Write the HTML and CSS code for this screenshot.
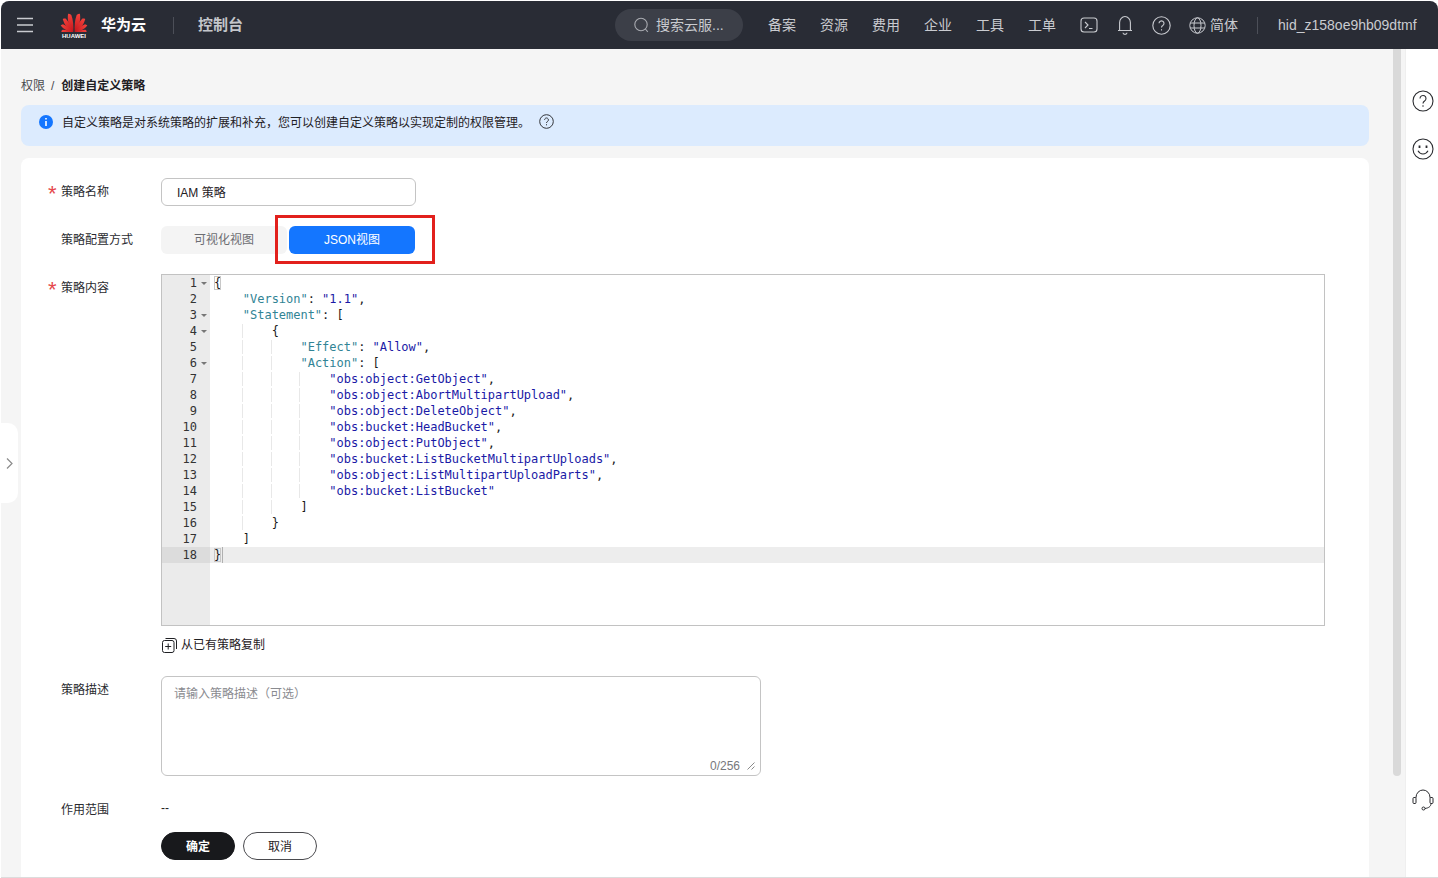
FILE: index.html
```html
<!DOCTYPE html>
<html lang="zh-CN">
<head>
    <meta charset="UTF-8">
    <title>创建自定义策略</title>
    <link rel="stylesheet" href="styles.css">
</head>
<body>
<div class="window">
    <header class="topbar">
        <svg class="icon-menu" width="16" height="16" viewBox="0 0 16 16"><path d="M0 1.5h16M0 8h16M0 14.5h16" stroke="#c9cbd0" stroke-width="1.6"/></svg>
        <div class="logo">
            <svg width="28" height="20" viewBox="0 0 28 20">
                <defs>
                    <linearGradient id="petal" x1="0" y1="0" x2="0" y2="1">
                        <stop offset="0" stop-color="#f4433c"/>
                        <stop offset="1" stop-color="#c4141b"/>
                    </linearGradient>
                    <path id="p" d="M0 0C-2.300-3.400-2.600-7.600-1.300-11.500C-.5-11.300.1-11 .6-10.500C1.200-7 .8-3.400 0 0Z" fill="url(#petal)"/>
                </defs>
                <g transform="translate(14 19.500)">
                    <use href="#p" transform="rotate(-10) translate(-.7 0) scale(1.600)"/>
                    <use href="#p" transform="rotate(10) translate(.7 0) scale(-1.600 1.600)"/>
                    <use href="#p" transform="rotate(-33) translate(-.7 0) scale(1.450)"/>
                    <use href="#p" transform="rotate(33) translate(.7 0) scale(-1.450 1.450)"/>
                    <use href="#p" transform="rotate(-57) translate(-.7 0) scale(1.250)"/>
                    <use href="#p" transform="rotate(57) translate(.7 0) scale(-1.250 1.250)"/>
                    <use href="#p" transform="rotate(-81) translate(-.7 0) scale(1.100)"/>
                    <use href="#p" transform="rotate(81) translate(.7 0) scale(-1.100 1.100)"/>
                </g>
            </svg>
            <span class="logo-text">HUAWEI</span>
        </div>
        <span class="brand">华为云</span>
        <span class="bar-divider"></span>
        <span class="console">控制台</span>

        <div class="search">
            <svg width="17" height="17" viewBox="0 0 17 17" fill="none" stroke="#a9abb1" stroke-width="1.1"><circle cx="8" cy="7.5" r="6.2"/><path d="M12.4 12l2.4 2.8"/></svg>
            <span>搜索云服...</span>
        </div>
        <nav class="nav">
            <a>备案</a>
            <a>资源</a>
            <a>费用</a>
            <a>企业</a>
            <a>工具</a>
            <a>工单</a>
        </nav>
        <div class="bar-icons">
            <svg width="18" height="18" viewBox="0 0 18 18" fill="none" stroke="#c9cbd0" stroke-width="1.1"><rect x="1" y="2" width="16" height="14" rx="3"/><path d="M5 6l3 3-3 3M9 12.5h3.5"/></svg>
            <svg width="18" height="20" viewBox="0 0 18 20" fill="none" stroke="#c9cbd0" stroke-width="1.1"><path d="M2 15.5h14M3.600 15.500V7.500a5.400 6 0 0 1 10.800 0v8M7 17.800a2 1.600 0 0 0 4 0"/></svg>
            <svg width="19" height="19" viewBox="0 0 19 19" fill="none" stroke="#c9cbd0" stroke-width="1.1"><circle cx="9.500" cy="9.500" r="8.700"/><path d="M7 7.300a2.500 2.500 0 1 1 3.800 2.200c-.9.500-1.300 1-1.300 2"/><path d="M9.500 13.200v1.300"/></svg>
        </div>
        <div class="lang">
            <svg width="17" height="17" viewBox="0 0 17 17" fill="none" stroke="#c9cbd0" stroke-width="1"><circle cx="8.500" cy="8.500" r="7.700"/><ellipse cx="8.500" cy="8.500" rx="3.500" ry="7.700"/><path d="M1.200 6h14.600M1.200 11h14.600"/></svg>
            <span>简体</span>
        </div>
        <span class="bar-divider user-divider"></span>
        <span class="user">hid_z158oe9hb09dtmf</span>
    </header>

    <div class="body-row">
        <main class="content">
            <div class="breadcrumb">
                <span>权限</span>
                <span class="crumb-sep">/</span>
                <strong>创建自定义策略</strong>
            </div>
            <div class="notice">
                <svg width="14" height="14" viewBox="0 0 14 14"><circle cx="7" cy="7" r="7" fill="#1476ff"/><path d="M7 3v1.600M7 6v5" stroke="#fff" stroke-width="1.600"/></svg>
                <span class="notice-text">自定义策略是对系统策略的扩展和补充，您可以创建自定义策略以实现定制的权限管理。</span>
                <svg class="notice-help" width="15" height="15" viewBox="0 0 15 15" fill="none" stroke="#33353a" stroke-width="1"><circle cx="7.500" cy="7.500" r="6.800"/><path d="M5.600 5.800a1.900 1.900 0 1 1 2.900 1.700c-.7.400-1 .8-1 1.500M7.500 10.200v1.100"/></svg>
            </div>

            <form class="card">
                <div class="row">
                    <label class="field-label required">策略名称</label>
                    <div class="text-input">IAM 策略</div>
                </div>
                <div class="row">
                    <label class="field-label">策略配置方式</label>
                    <div class="segmented">
                        <span class="seg">可视化视图</span>
                        <span class="seg seg-active">JSON视图</span>
                        <span class="highlight-box"></span>
                    </div>
                </div>
                <div class="row row-editor">
                    <label class="field-label required">策略内容</label>
                    <div>
                        <div class="editor">
                            <div class="gutter">
                                <div class="gl fold">1</div>
                                <div class="gl">2</div>
                                <div class="gl fold">3</div>
                                <div class="gl fold">4</div>
                                <div class="gl">5</div>
                                <div class="gl fold">6</div>
                                <div class="gl">7</div>
                                <div class="gl">8</div>
                                <div class="gl">9</div>
                                <div class="gl">10</div>
                                <div class="gl">11</div>
                                <div class="gl">12</div>
                                <div class="gl">13</div>
                                <div class="gl">14</div>
                                <div class="gl">15</div>
                                <div class="gl">16</div>
                                <div class="gl">17</div>
                                <div class="gl gl-active">18</div>
                            </div>
                            <div class="code">
<div class="cl"><span class="match">{</span></div>
<div class="cl"><span class="n">    </span><span class="k">"Version"</span>: <span class="s">"1.1"</span>,</div>
<div class="cl"><span class="n">    </span><span class="k">"Statement"</span>: [</div>
<div class="cl"><span class="g">    </span><span class="n">    </span>{</div>
<div class="cl"><span class="g">    </span><span class="g">    </span><span class="n">    </span><span class="k">"Effect"</span>: <span class="s">"Allow"</span>,</div>
<div class="cl"><span class="g">    </span><span class="g">    </span><span class="n">    </span><span class="k">"Action"</span>: [</div>
<div class="cl"><span class="g">    </span><span class="g">    </span><span class="g">    </span><span class="n">    </span><span class="s">"obs:object:GetObject"</span>,</div>
<div class="cl"><span class="g">    </span><span class="g">    </span><span class="g">    </span><span class="n">    </span><span class="s">"obs:object:AbortMultipartUpload"</span>,</div>
<div class="cl"><span class="g">    </span><span class="g">    </span><span class="g">    </span><span class="n">    </span><span class="s">"obs:object:DeleteObject"</span>,</div>
<div class="cl"><span class="g">    </span><span class="g">    </span><span class="g">    </span><span class="n">    </span><span class="s">"obs:bucket:HeadBucket"</span>,</div>
<div class="cl"><span class="g">    </span><span class="g">    </span><span class="g">    </span><span class="n">    </span><span class="s">"obs:object:PutObject"</span>,</div>
<div class="cl"><span class="g">    </span><span class="g">    </span><span class="g">    </span><span class="n">    </span><span class="s">"obs:bucket:ListBucketMultipartUploads"</span>,</div>
<div class="cl"><span class="g">    </span><span class="g">    </span><span class="g">    </span><span class="n">    </span><span class="s">"obs:object:ListMultipartUploadParts"</span>,</div>
<div class="cl"><span class="g">    </span><span class="g">    </span><span class="g">    </span><span class="n">    </span><span class="s">"obs:bucket:ListBucket"</span></div>
<div class="cl"><span class="g">    </span><span class="g">    </span><span class="n">    </span>]</div>
<div class="cl"><span class="g">    </span><span class="n">    </span>}</div>
<div class="cl"><span class="n">    </span>]</div>
<div class="cl cl-active"><span class="match">}</span><span class="cursor"></span></div>
                            </div>
                        </div>
                        <div class="copy-link">
                            <svg width="15" height="15" viewBox="0 0 15 15" fill="none" stroke="#1f2024" stroke-width="1"><rect x=".5" y="2.500" width="11.500" height="12" rx="2"/><path d="M3.500.5h8.500a2.500 2.500 0 0 1 2.500 2.500v8M6.200 5.500v6M3.200 8.500h6"/></svg>
                            <span>从已有策略复制</span>
                        </div>
                    </div>
                </div>
                <div class="row row-desc">
                    <label class="field-label">策略描述</label>
                    <div class="textarea">
                        <span class="placeholder">请输入策略描述（可选）</span>
                        <div class="textarea-foot">
                            <span class="count">0/256</span>
                            <svg width="8" height="8" viewBox="0 0 8 8" fill="none" stroke="#8a8a8a" stroke-width="1"><path d="M.5 7.500l7-7M4.500 7.500l3-3"/></svg>
                        </div>
                    </div>
                </div>
                <div class="row row-scope">
                    <label class="field-label">作用范围</label>
                    <span class="scope-value">--</span>
                </div>
                <div class="row row-actions">
                    <span></span>
                    <div class="actions">
                        <button type="button" class="btn btn-primary">确定</button>
                        <button type="button" class="btn">取消</button>
                    </div>
                </div>
            </form>
        </main>
        <div class="scrollbar"><div class="thumb"></div></div>
        <aside class="rail">
            <div class="rail-top">
                <svg width="22" height="22" viewBox="0 0 22 22" fill="none" stroke="#2a2b2f" stroke-width="1.100"><circle cx="11" cy="11" r="10"/><path d="M8 8.500a3 3 0 1 1 4.600 2.500c-1.100.7-1.600 1.300-1.600 2.500M11 15.200v1.500"/></svg>
                <svg width="22" height="22" viewBox="0 0 22 22" fill="none" stroke="#2a2b2f" stroke-width="1.100"><circle cx="11" cy="11" r="10"/><path d="M6 12.800c1.100 2.100 2.800 3.200 5 3.200s3.900-1.100 5-3.200"/><path d="M7.500 7.500v2.500M14.500 7.500v2.500" stroke-width="1.800"/></svg>
            </div>
            <svg class="rail-service" width="22" height="22" viewBox="0 0 22 22" fill="none" stroke="#2a2b2f" stroke-width="1"><path d="M4 9V8.500a7 7.500 0 0 1 14 0V9"/><rect x="1" y="8.500" width="3" height="6" rx="1"/><rect x="18" y="8.500" width="3" height="6" rx="1"/><path d="M19 14.500c0 3-2.500 4.500-6 5"/><circle cx="11.500" cy="19.500" r="1.500"/></svg>
        </aside>
        <div class="side-tab">
            <svg width="7" height="11" viewBox="0 0 7 11" fill="none" stroke="#8b8b8b" stroke-width="1.200"><path d="M1 .5l5 5-5 5"/></svg>
        </div>
    </div>
</div>
</body>
</html>
```

FILE: styles.css
```css
* {
    box-sizing: border-box;
    margin: 0;
    padding: 0;
}

body {
    height: 878px;
    overflow: hidden;
    background: #fff;
    font-family: "Liberation Sans", "Noto Sans CJK SC", sans-serif;
    font-size: 12px;
    color: #1f2024;
}

.window {
    height: 877px;
    margin: 1px 0 0 1px;
    display: flex;
    flex-direction: column;
    border-bottom: 1px solid #dcdcdc;
}

/* top bar */
.topbar {
    height: 48px;
    flex: none;
    display: flex;
    align-items: center;
    padding-left: 16px;
    background: #292c35;
    border-radius: 8px 8px 0 0;
    color: #c9cbd0;
}

.icon-menu {
    flex: none;
}

.logo {
    width: 28px;
    margin-left: 27px;
    display: flex;
    flex-direction: column;
    align-items: center;
    line-height: 1;
}

.logo-text {
    margin-top: 1px;
    font-size: 6px;
    font-weight: 700;
    color: #fff;
}

.brand {
    margin-left: 13px;
    padding-bottom: 4px;
    font-size: 15px;
    font-weight: 700;
    color: #fff;
}

.bar-divider {
    width: 1px;
    height: 17px;
    margin-left: 27px;
    background: #4c4f58;
}

.console {
    margin-left: 24px;
    padding-bottom: 4px;
    font-size: 15px;
    font-weight: 700;
    color: #c4c6cb;
}

.search {
    width: 128px;
    height: 32px;
    margin-left: 372px;
    padding: 0 0 0 18px;
    display: flex;
    align-items: center;
    gap: 6px;
    border-radius: 16px;
    background: #3c3f48;
    font-size: 14px;
}

.search span,
.lang span {
    padding-bottom: 2px;
}

.nav {
    margin-left: 25px;
    padding-bottom: 2px;
    display: flex;
    gap: 24px;
    font-size: 14px;
}

.bar-icons {
    margin-left: 24px;
    display: flex;
    align-items: center;
    gap: 18px;
}

.lang {
    margin-left: 18px;
    display: flex;
    align-items: center;
    gap: 4px;
    font-size: 14px;
}

.user-divider {
    margin-left: 19px;
}

.user {
    margin-left: 20px;
    font-size: 14px;
}

/* page body */
.body-row {
    position: relative;
    flex: 1;
    min-height: 0;
    display: flex;
    background: #f5f5f5;
}

.content {
    width: 1368px;
    flex: none;
    padding: 28px 0 0 20px;
    overflow: hidden;
}

.breadcrumb {
    height: 18px;
    display: flex;
    align-items: center;
    line-height: 18px;
}

.breadcrumb span {
    color: #4a4b50;
}

.crumb-sep {
    margin: 0 7px 0 6px;
}

.breadcrumb strong {
    font-weight: 600;
}

.notice {
    height: 41px;
    margin-top: 10px;
    padding: 0 0 8px 18px;
    display: flex;
    align-items: center;
    background: #dcebfe;
    border-radius: 8px;
}

.notice-text {
    margin-left: 9px;
}

.notice-help {
    margin-left: 9px;
}

.card {
    height: 720px;
    margin-top: 12px;
    padding: 20px 44px 0 40px;
    background: #fff;
    border-radius: 8px 8px 0 0;
}

.row {
    display: grid;
    grid-template-columns: 100px 1fr;
    margin-bottom: 20px;
}

.field-label {
    position: relative;
    padding-top: 5px;
    line-height: 18px;
    color: #2a2b30;
}

.required::before {
    content: "*";
    position: absolute;
    left: -13px;
    top: 5px;
    font-size: 22px;
    line-height: 22px;
    font-weight: 400;
    color: #e5484d;
}

.text-input {
    width: 255px;
    height: 28px;
    padding-left: 15px;
    border: 1px solid #c4c4c4;
    border-radius: 6px;
    line-height: 28px;
}

.segmented {
    position: relative;
    width: 254px;
    height: 28px;
    display: flex;
    gap: 2px;
}

.seg {
    flex: 1;
    text-align: center;
    line-height: 28px;
    border-radius: 6px;
    background: #f4f4f4;
    color: #6c6d72;
}

.seg-active {
    background: #1476ff;
    color: #fff;
}

/* annotation drawn over the screenshot */
.highlight-box {
    position: absolute;
    left: 114px;
    top: -11px;
    width: 160px;
    height: 49px;
    border: 3px solid #e2201c;
}

.row-editor {
    margin-bottom: 0;
}

.editor {
    height: 352px;
    display: flex;
    border: 1px solid #c2c2c2;
    font-family: "DejaVu Sans Mono", monospace;
    font-size: 12px;
    line-height: 16px;
    color: #1a1a1a;
}

.gutter {
    width: 48px;
    flex: none;
    background: #ebebeb;
    color: #333;
}

.gl {
    position: relative;
    height: 16px;
    padding-right: 13px;
    text-align: right;
}

.gl-active {
    background: #dcdcdc;
}

.fold::after {
    content: "";
    position: absolute;
    right: 3px;
    top: 7px;
    border: 3px solid transparent;
    border-top-color: #777;
    border-bottom-width: 0;
}

.code {
    flex: 1;
    min-width: 0;
    letter-spacing: -0.02px;
}

.cl {
    position: relative;
    height: 16px;
    padding-left: 4px;
    white-space: pre;
}

.cl-active {
    background: #ededed;
}

.k {
    color: #318495;
}

.s {
    color: #1a1aa6;
}

.g {
    background: linear-gradient(#e8e8e8, #e8e8e8) right / 1px 100% no-repeat;
}

.match {
    outline: 1px solid #c8c8c8;
    outline-offset: -1px;
}

.cursor {
    position: absolute;
    left: 12px;
    top: 0;
    width: 1px;
    height: 16px;
    background: #b0b0b0;
}

.copy-link {
    height: 18px;
    margin-top: 10px;
    padding-left: 1px;
    display: flex;
    align-items: center;
    gap: 4px;
    line-height: 18px;
}

.row-desc {
    margin-top: 22px;
}

.textarea {
    width: 600px;
    height: 100px;
    padding: 8px 5px 0 12px;
    display: flex;
    flex-direction: column;
    justify-content: space-between;
    border: 1px solid #c4c4c4;
    border-radius: 6px;
    line-height: 18px;
}

.placeholder {
    color: #8a8b90;
}

.textarea-foot {
    height: 16px;
    margin-bottom: 1px;
    display: flex;
    justify-content: flex-end;
    align-items: center;
    gap: 7px;
    color: #77787c;
}

.row-scope {
    margin-top: 20px;
    margin-bottom: 13px;
}

.scope-value {
    padding-top: 3px;
    line-height: 18px;
}

.actions {
    display: flex;
    gap: 8px;
}

.btn {
    width: 74px;
    height: 28px;
    padding-bottom: 2px;
    border: 1px solid #4a4a4e;
    border-radius: 14px;
    background: #fff;
    font: inherit;
    color: #1f2024;
}

.btn-primary {
    border-color: #18191c;
    background: #18191c;
    color: #fff;
    font-weight: 600;
}

.scrollbar {
    width: 36px;
    flex: none;
    padding-left: 24px;
}

.thumb {
    width: 8px;
    height: 727px;
    border-radius: 0 0 4px 4px;
    background: #d9d9d9;
}

.rail {
    flex: 1;
    padding: 41px 0 66px 2px;
    display: flex;
    flex-direction: column;
    align-items: center;
    justify-content: space-between;
    background: #fff;
    border-left: 1px solid #efefef;
}

.rail-top {
    display: flex;
    flex-direction: column;
    gap: 26px;
}

.side-tab {
    position: absolute;
    left: -1px;
    top: 374px;
    width: 18px;
    height: 80px;
    display: flex;
    align-items: center;
    justify-content: center;
    background: #fff;
    border-radius: 0 10px 10px 0;
}
```
